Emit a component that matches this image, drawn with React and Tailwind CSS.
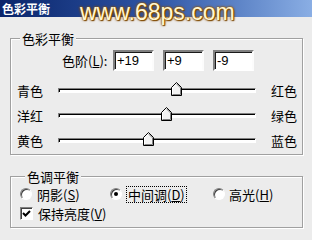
const cjk = "font-['Noto_Sans_CJK_SC','Liberation_Sans',sans-serif]";

const sliders = [
  { left: "青色", right: "红色", value: 19 },
  { left: "洋红", right: "绿色", value: 9 },
  { left: "黄色", right: "蓝色", value: -9 },
];

function Thumb() {
  return (
    <svg width="11" height="14" viewBox="0 0 11 14">
      <polygon points="0.5,5.5 5.5,0.5 10.5,5.5 10.5,13.5 0.5,13.5" fill="#f2f2f2" stroke="#000" />
      <polyline points="1.5,12.5 1.5,5.9 5.5,1.9" fill="none" stroke="#fff" />
      <polyline points="5.5,1.9 9.5,5.9 9.5,12.5 1.5,12.5" fill="none" stroke="#808080" />
    </svg>
  );
}

function Slider({ left, right, value }) {
  const x = ((value + 100) / 200) * 198;
  return (
    <div className="flex items-center h-[25px]">
      <span className="w-[41px] leading-[13px]">{left}</span>
      <div className="relative w-[198px] h-[5px] border border-t-[#808080] border-l-[#808080] border-b-white border-r-white">
        <div className="h-full bg-white border-t border-l border-black" />
        <div className="absolute top-[-7px]" style={{ left: x - 6 }}>
          <Thumb />
        </div>
      </div>
      <span className="ml-[15px] leading-[13px]">{right}</span>
    </div>
  );
}

function NumBox({ value }) {
  return (
    <div className="w-[41px] h-[21px] border-2 border-t-[#808080] border-l-[#808080] border-b-white border-r-[#fcfcfc] shadow-[inset_1px_1px_0_#1a1a1a] bg-white flex items-center pl-[2px] font-['Liberation_Sans',sans-serif] text-[13px] text-black">
      {value}
    </div>
  );
}

function Radio({ checked }) {
  return (
    <span className="w-[12px] h-[12px] rounded-full bg-white border border-t-[#808080] border-l-[#808080] border-b-white border-r-white shadow-[inset_1px_1px_0_#404040] flex items-center justify-center">
      {checked && <span className="w-[4px] h-[4px] rounded-full bg-black" />}
    </span>
  );
}

export default function App() {
  return (
    <div className={`relative w-[312px] h-[240px] bg-[#ececec] text-[13px] text-black overflow-hidden ${cjk}`}>
      {/* title bar */}
      <div className="h-[17px] bg-gradient-to-r from-[#0a246a] via-[#2f56a6] to-[#8aaee4] flex items-center pl-[2px]">
        <span className="text-white font-bold text-[12px] leading-[13px]">色彩平衡</span>
      </div>
      <div className="absolute left-[80px] top-0 font-['Liberation_Sans',sans-serif] text-[23px] leading-[25px] text-[#fff6d2] [text-shadow:0_0_1px_#9a5a00,0_0_2px_#9a5a00,0_0_3px_#8a4e00,1px_1px_1px_#6b3e00]">
        www.68ps.com
      </div>

      {/* color balance */}
      <fieldset className="mt-[15px] ml-[10px] w-[293px] border border-[#a0a0a0] shadow-[inset_1px_1px_0_#fff,1px_1px_0_#fff] pl-[6px] pb-[1px]">
        <legend className="ml-[3px] px-[2px] leading-[13px] bg-[#ececec]">色彩平衡</legend>
        <div className="pt-[5px] flex items-center">
          <span className="ml-[45px] w-[51px] leading-[13px]">
            色阶(<span className="underline">L</span>):
          </span>
          <div className="flex gap-[9px]">
            <NumBox value="+19" />
            <NumBox value="+9" />
            <NumBox value="-9" />
          </div>
        </div>
        <div className="mt-[7px]">
          {sliders.map((s) => (
            <Slider key={s.left} {...s} />
          ))}
        </div>
      </fieldset>

      {/* tone balance */}
      <fieldset className="mt-[15px] ml-[10px] w-[293px] border border-[#a0a0a0] shadow-[inset_1px_1px_0_#fff,1px_1px_0_#fff] pl-[9px] pb-[6px]">
        <legend className="ml-[5px] px-[2px] leading-[13px] bg-[#ececec]">色调平衡</legend>
        <div className="pt-[3px] flex items-center h-[19px]">
          <label className="w-[90px] flex items-center gap-[5px]">
            <Radio />
            <span className="leading-[13px]">阴影(<span className="underline">S</span>)</span>
          </label>
          <label className="w-[103px] flex items-center gap-[4px]">
            <Radio checked />
            <span className="leading-[13px] border border-dotted border-black px-[1px] py-[1px]">
              中间调(<span className="underline">D</span>)
            </span>
          </label>
          <label className="flex items-center gap-[4px]">
            <Radio />
            <span className="leading-[13px]">高光(<span className="underline">H</span>)</span>
          </label>
        </div>
        <div className="mt-[3px] flex items-center gap-[5px] h-[16px]">
          <span className="w-[13px] h-[13px] bg-white border border-t-[#808080] border-l-[#808080] border-b-white border-r-white shadow-[inset_1px_1px_0_#404040] flex items-center justify-center">
            <svg width="9" height="9" viewBox="0 0 9 9">
              <polyline points="1,4 3.5,6.5 8,2" fill="none" stroke="#000" strokeWidth="2" />
            </svg>
          </span>
          <span className="leading-[13px]">保持亮度(<span className="underline">V</span>)</span>
        </div>
      </fieldset>
    </div>
  );
}
